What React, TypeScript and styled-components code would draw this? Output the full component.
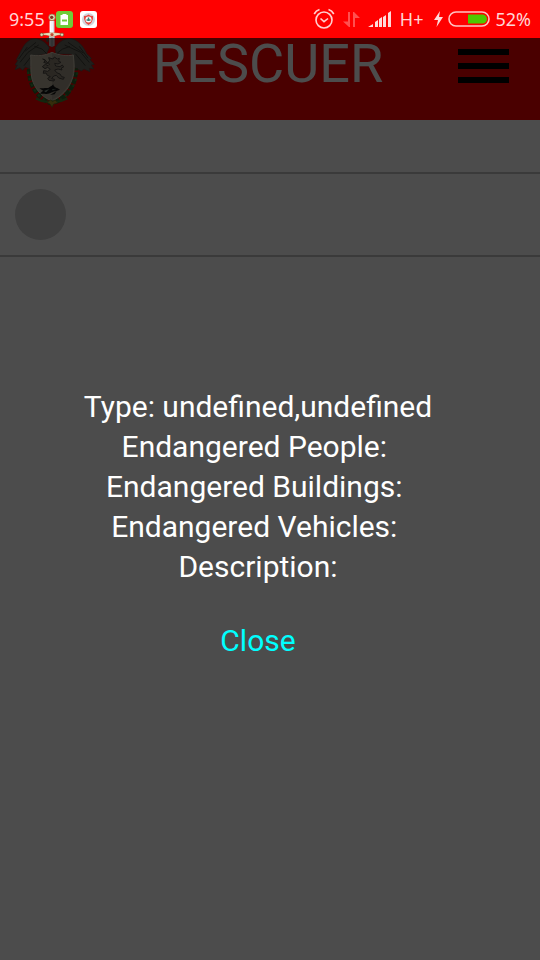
import React, { useState } from "react";
import styled, { createGlobalStyle } from "styled-components";

const GlobalStyle = createGlobalStyle`
  * { box-sizing: border-box; }
  body { margin: 0; background: #fff; font-family: Roboto, sans-serif; }
`;

const Page = styled.div`
  display: flex;
  flex-direction: column;
  min-height: 100vh;
`;

const StatusBar = styled.div`
  display: flex;
  justify-content: space-between;
  align-items: center;
  height: 38px;
  padding: 0 9px;
  background: #ff0000;
  color: #ffd6d6;
  font-family: "Noto Sans", sans-serif;
  font-size: 18px;
  line-height: 24px;
`;

const StatusGroup = styled.div<{ $gap: number }>`
  display: flex;
  align-items: center;
  gap: ${(p) => p.$gap}px;
`;

const Screen = styled.div`
  position: relative;
  flex: 1;
`;

const Header = styled.header`
  position: relative;
  display: flex;
  justify-content: space-between;
  align-items: flex-start;
  height: 82px;
  padding: 0 28px 0 15px;
  background: #f80000;
`;

const Brand = styled.div`
  display: flex;
  align-items: flex-start;
  gap: 58px;
`;

const Emblem = styled.svg`
  display: block;
  width: 80px;
  height: 96px;
  margin-top: -25px;
`;

const Title = styled.h1`
  margin: 0;
  color: #fff;
  font-size: 54px;
  font-weight: 400;
  line-height: 52px;
`;

const MenuButton = styled.button`
  display: flex;
  flex-direction: column;
  gap: 8px;
  padding: 11px 3px;
  border: 0;
  background: none;
`;

const MenuBar = styled.span`
  width: 51px;
  height: 6px;
  background: #000;
`;

const List = styled.ul`
  margin: 0;
  padding: 52px 0 0;
  list-style: none;
`;

const ListRow = styled.li`
  padding: 15px;
  border: solid #c4c4c4;
  border-width: 2px 0;
`;

const Avatar = styled.div`
  width: 51px;
  height: 51px;
  border-radius: 50%;
  background: #d2d2d2;
`;

const Overlay = styled.div`
  position: absolute;
  inset: 0;
  display: flex;
  flex-direction: column;
  align-items: center;
  padding: 349px 24px 0 0;
  background: rgba(0, 0, 0, 0.7);
  color: #fff;
  font-size: 30px;
  line-height: 40px;
`;

const Line = styled.p`
  margin: 0;
  white-space: pre;
`;

const CloseButton = styled.button`
  margin-top: 34px;
  padding: 0;
  border: 0;
  background: none;
  color: #00ffff;
  font: inherit;
`;

const EmblemArt = () => (
  <Emblem viewBox="45 36 240 288" aria-label="Emblem" role="img">
    <g fill="#68685e" stroke="#505048" strokeWidth="2" strokeLinejoin="round">
      <path d="M148 140 C128 112 108 112 92 116 C72 126 66 146 59 158 L49 176 L54 178 L45 192 L52 192 L45 206 L60 200 L68 208 L76 198 L90 204 L98 166 L140 158Z" />
      <path d="M166 140 C184 112 206 110 222 116 C244 126 252 142 260 158 L274 172 L270 176 L283 190 L274 192 L281 204 L268 202 L270 212 L252 204 L244 210 L220 198 L216 160 L168 158Z" />
    </g>
    <g fill="none" stroke="#3c3c35" strokeWidth="3">
      <path d="M60 184 L84 154 L116 132 M72 194 L92 168 M76 150 L108 124 M56 174 L82 138" />
      <path d="M268 184 L242 154 L194 132 M256 194 L226 158 M250 156 L204 124 M264 172 L238 136" />
      <path d="M103 136 L126 144 L140 158 M210 136 L188 144 L172 156" />
    </g>
    <path d="M88 204 C88 250 112 292 154 306 C200 294 228 252 226 202" fill="none" stroke="#286228" strokeWidth="15" strokeDasharray="15 5" />
    <path d="M84 212 C90 258 116 294 154 308 C198 296 228 258 232 212" fill="none" stroke="#3e8438" strokeWidth="6" strokeDasharray="7 12" />
    <path d="M92 162 C112 166 136 164 156 154 C178 164 202 166 220 162 C222 186 226 210 216 236 C206 264 186 286 156 300 C124 288 104 262 96 234 C90 208 94 186 92 162Z" fill="#b7ad99" stroke="#d4cbb8" strokeWidth="3" />
    <path d="M156 156 C178 164 202 166 218 164 C220 188 222 212 214 234 C204 260 186 282 156 296Z" fill="#a69c8a" />
    <path d="M128 174 l8 5 l-5 5 l11 4 l7 -10 l-3 -8 l13 4 l4 -6 l9 6 l6 -2 l-2 9 l7 3 l-9 5 l-10 -2 l3 8 l13 2 l7 -5 l4 6 l-7 3 l2 6 l-12 -3 l-10 3 l6 8 l10 4 l5 8 l8 2 l-3 6 l-14 -4 l-7 -8 l-8 2 l-6 8 l9 2 l-2 5 l-15 -2 l-4 -6 l8 -5 l-9 -4 l-4 -7 l-8 1 l1 -8 l12 2 l8 -6 l-8 -6 l-8 4 l-8 -6 l9 -7 l8 4 l5 -5 l-9 -6 l-5 -7Z" fill="#8d8374" stroke="#4a4641" strokeWidth="3" strokeLinejoin="round" />
    <path d="M120 278 C130 266 148 262 160 250 C160 260 172 260 180 266 L170 270 C156 270 148 282 134 278Z M118 262 C134 262 142 258 152 264 L134 272Z M150 282 L170 270 L164 280Z" fill="#151515" />
    <g fill="#a9b9b0" stroke="#25362b" strokeWidth="1">
      <path d="M132 270 L148 264 L138 274Z M156 265 L168 264 L158 268Z" />
    </g>
    <path d="M108 292 Q130 306 154 301 Q178 306 202 292" fill="none" stroke="#438335" strokeWidth="6" />
    <path d="M142 304 l10 -7 l6 5 l7 -5 l8 8 l-12 4 l-5 10 l-6 -10Z" fill="#b19826" stroke="#6c6823" strokeWidth="2" />
    <path d="M147 105 H164 V134 L156 138 L147 134Z" fill="#c2c3c6" />
    <path d="M156 104 V138" stroke="#777980" strokeWidth="2" />
    <path d="M138 112 l9 -3 l-2 15 l-6 -3Z" fill="#4e6151" />
    <path d="M149 59 H163 V96 H149Z" fill="#f0f4fa" />
    <path d="M151 61 V96" stroke="#ffffff" strokeWidth="3" />
    <path d="M161 60 V94" stroke="#c1c7d3" strokeWidth="2" />
    <circle cx="156" cy="49" r="10" fill="#ddd6ad" stroke="#8b673f" strokeWidth="2" />
    <circle cx="155" cy="49" r="5" fill="#7f3021" />
    <path d="M124 98 Q142 95 150 95 H164 Q174 95 188 98 V103 Q175 101 166 105 H148 Q136 101 124 103Z" fill="#e8dfbb" stroke="#805532" strokeWidth="1" />
    <circle cx="125" cy="101" r="5" fill="#e0dab8" stroke="#624d29" strokeWidth="2" />
    <circle cx="186" cy="101" r="5" fill="#e0dab8" stroke="#624d29" strokeWidth="2" />
    <circle cx="156" cy="101" r="6" fill="#c24b36" stroke="#e8dfbb" strokeWidth="2" />
  </Emblem>
);

const BatteryAppIcon = () => (
  <svg width="17" height="17" viewBox="0 0 17 17">
    <rect width="17" height="17" rx="3" fill="#70cc38" />
    <path d="M6.500 3h4v1h1.500v10H4.500V4h2z" fill="#fff" />
    <path d="M6 8.500h5v2H6z" fill="#70cc38" />
  </svg>
);

const ShieldAppIcon = () => (
  <svg width="17" height="17" viewBox="0 0 17 17">
    <rect width="17" height="17" rx="3" fill="#fff" />
    <circle cx="8.5" cy="8.5" r="6.5" fill="#d2d5dc" />
    <path d="M4 5 Q7 5 8.500 3.500 Q10 5 13 5 V8 Q12 12 8.500 14 Q5 12 4 8Z" fill="#e34b43" />
    <circle cx="8.500" cy="8.500" r="3" fill="#fff" />
    <path d="M8.500 6.500v3.500M6.500 9h4" stroke="#378477" strokeWidth="1.500" />
  </svg>
);

const AlarmIcon = () => (
  <svg width="22" height="22" viewBox="0 0 22 22" fill="none" stroke="#ffd0d0" strokeWidth="1.600">
    <circle cx="11" cy="12" r="8" />
    <path d="M7.500 10.500l3.500 3.200 4-3.200M1.200 6Q3 2.800 6.500 1.600M20.800 6Q19 2.800 15.500 1.600" />
  </svg>
);

const DataIcon = () => (
  <svg width="17" height="17" viewBox="0 0 17 17" fill="#ff5050">
    <path d="M5 1h2v15H6L0 10.500h5zM10 1H11l6 6h-5v9h-2z" />
  </svg>
);

const SignalIcon = () => (
  <svg width="24" height="17" viewBox="0 0 24 17" fill="#ffdada">
    <path d="M0 16l5-3v3zM7 11l3-2v7H7zM11 8l3-2v10h-3zM15 6l3-2v12h-3zM20 2l3-2v16h-3z" />
  </svg>
);

const ChargeIcon = () => (
  <svg width="9" height="16" viewBox="0 0 9 16" fill="#ffdada">
    <path d="M6 0L0 9h4L2.500 16 9 6H5z" />
  </svg>
);

const BatteryIcon = () => (
  <svg width="42" height="16" viewBox="0 0 42 16">
    <rect x="1" y="1" width="40" height="14" rx="7" fill="none" stroke="#ffc4c4" strokeWidth="1.600" />
    <path d="M20 3.500h14.500a4.500 4.500 0 0 1 0 9H20z" fill="#4cc800" />
  </svg>
);

const StatusText = styled.span``;

const details = [
  "Type: undefined,undefined",
  "Endangered People: ",
  "Endangered Buildings: ",
  "Endangered Vehicles: ",
  "Description:",
];

export default function App() {
  const [open, setOpen] = useState(true);
  return (
    <Page>
      <GlobalStyle />
      <StatusBar>
        <StatusGroup $gap={11}>
          <StatusText>9:55</StatusText>
          <StatusGroup $gap={7}>
            <BatteryAppIcon />
            <ShieldAppIcon />
          </StatusGroup>
        </StatusGroup>
        <StatusGroup $gap={11}>
          <StatusGroup $gap={8}>
            <AlarmIcon />
            <DataIcon />
            <SignalIcon />
            <StatusText>H+</StatusText>
          </StatusGroup>
          <StatusGroup $gap={5}>
            <ChargeIcon />
            <BatteryIcon />
            <StatusText>52%</StatusText>
          </StatusGroup>
        </StatusGroup>
      </StatusBar>
      <Screen>
        <Header>
          <Brand>
            <EmblemArt />
            <Title>RESCUER</Title>
          </Brand>
          <MenuButton aria-label="Menu">
            <MenuBar />
            <MenuBar />
            <MenuBar />
          </MenuButton>
        </Header>
        <List>
          <ListRow>
            <Avatar />
          </ListRow>
        </List>
        {open && (
          <Overlay role="dialog" aria-label="Details">
            {details.map((text) => (
              <Line key={text}>{text}</Line>
            ))}
            <CloseButton onClick={() => setOpen(false)}>Close</CloseButton>
          </Overlay>
        )}
      </Screen>
    </Page>
  );
}
